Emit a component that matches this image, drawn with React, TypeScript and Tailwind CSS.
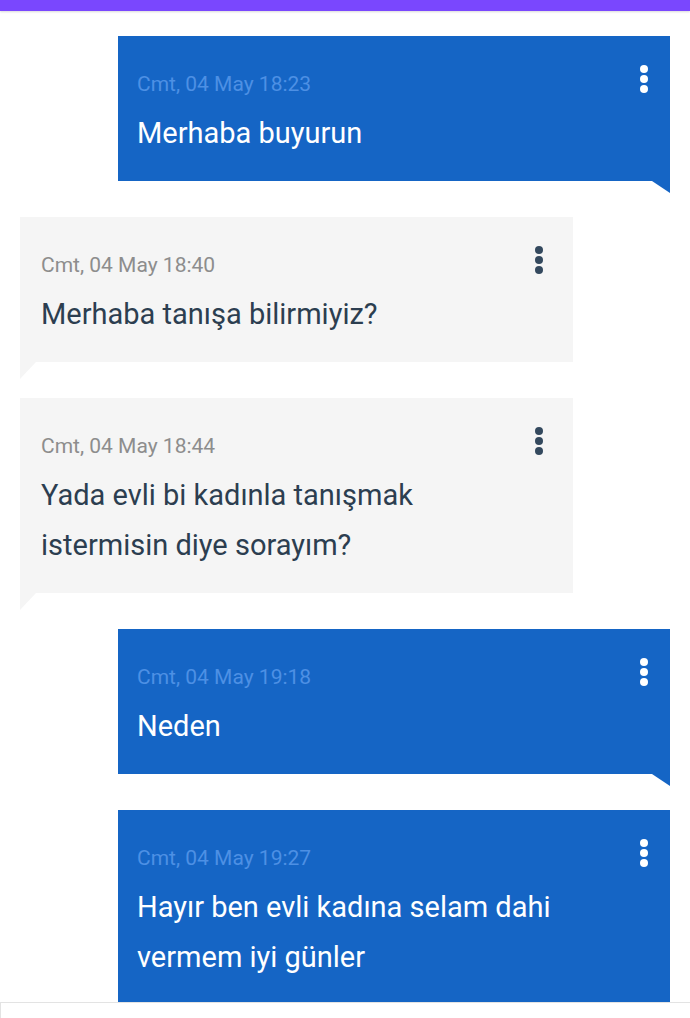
const messages = [
  { id: 1, mine: true, time: 'Cmt, 04 May 18:23', text: ['Merhaba buyurun'] },
  { id: 2, mine: false, time: 'Cmt, 04 May 18:40', text: ['Merhaba tanışa bilirmiyiz?'] },
  { id: 3, mine: false, time: 'Cmt, 04 May 18:44', text: ['Yada evli bi kadınla tanışmak', 'istermisin diye sorayım?'] },
  { id: 4, mine: true, time: 'Cmt, 04 May 19:18', text: ['Neden'] },
  { id: 5, mine: true, time: 'Cmt, 04 May 19:27', text: ['Hayır ben evli kadına selam dahi', 'vermem iyi günler'] },
]

function Dots({ mine }: { mine: boolean }) {
  const dot = mine ? 'bg-white' : 'bg-[#34495e]'
  return (
    <div className="flex flex-col gap-[2px] -mt-[4px]">
      <span className={`block w-[8px] h-[8px] rounded-full ${dot}`} />
      <span className={`block w-[8px] h-[8px] rounded-full ${dot}`} />
      <span className={`block w-[8px] h-[8px] rounded-full ${dot}`} />
    </div>
  )
}

function Bubble({ mine, time, text }: { mine: boolean; time: string; text: string[] }) {
  return (
    <div className={`relative ${mine ? 'ml-[118px] mr-[20px]' : 'ml-[20px] mr-[117px]'}`}>
      <div
        className={`pt-[33px] pb-[23px] ${mine ? 'bg-[#1565c5] pl-[19px] pr-[22px]' : 'bg-[#f5f5f5] pl-[21px] pr-[30px]'}`}
      >
        <div className="flex items-start justify-between h-[30px]">
          <span
            className={`text-[21px] leading-[30px] ${mine ? 'text-[#4d90e4]' : 'text-[#8d8d8d]'}`}
          >
            {time}
          </span>
          <Dots mine={mine} />
        </div>
        <div
          className={`mt-[9px] text-[29px] leading-[50px] ${mine ? 'text-white' : 'text-[#2c3e50]'}`}
        >
          {text.map((line) => (
            <div key={line}>{line}</div>
          ))}
        </div>
      </div>
      {/* tail */}
      {mine ? (
        <svg className="absolute right-0 top-full" width="18" height="12" viewBox="0 0 18 12">
          <polygon points="0,0 18,0 18,12" fill="#1565c5" />
        </svg>
      ) : (
        <svg className="absolute left-0 top-full" width="16" height="17" viewBox="0 0 16 17">
          <polygon points="0,0 16,0 0,17" fill="#f5f5f5" />
        </svg>
      )}
    </div>
  )
}

export default function App() {
  return (
    <div
      className="w-[690px] h-[1018px] overflow-hidden bg-white"
      style={{ fontFamily: 'Roboto, "Noto Sans", sans-serif' }}
    >
      <div className="h-[11px] bg-[#7a47fe] shadow-[0_1px_2px_rgba(0,0,0,0.15)]" />

      <div className="flex flex-col gap-[36px] pt-[25px]">
        {messages.map((m) => (
          <Bubble key={m.id} mine={m.mine} time={m.time} text={m.text} />
        ))}
      </div>

      {/* bottom input strip */}
      <div className="fixed left-0 bottom-0 w-[690px] h-[16px] bg-white border-t border-l border-[#e3e3e3]" />
    </div>
  )
}
